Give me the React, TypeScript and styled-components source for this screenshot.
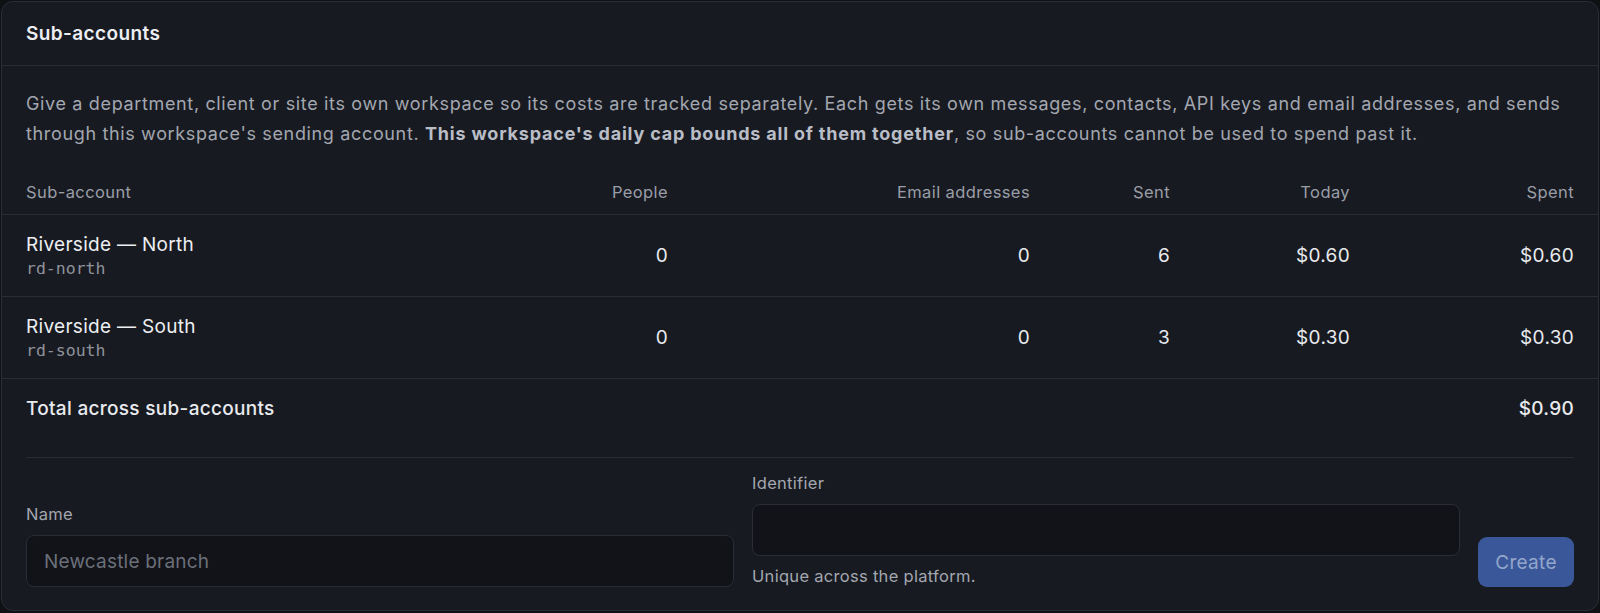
import React, { FC } from 'react';
import styled, { createGlobalStyle } from 'styled-components';

const GlobalStyle = createGlobalStyle`
    * {
        box-sizing: border-box;
    }
    body {
        margin: 0;
        background: #0f1115;
        font-family: Inter, "Noto Sans", sans-serif;
        color: #e6e8ec;
    }
`;

const Card = styled.section`
    margin: 1px;
    height: 610px;
    background: #181a21;
    border: 1px solid #2a2d35;
    border-radius: 12px;
    display: flex;
    flex-direction: column;
    overflow: hidden;
`;

const CardHeader = styled.header`
    height: 64px;
    padding: 0 24px;
    display: flex;
    align-items: center;
    border-bottom: 1px solid #2a2d35;
`;

const Title = styled.h2`
    margin: 0;
    font-size: 19px;
    letter-spacing: 0.4px;
    font-weight: 600;
    color: #eceef2;
`;

const Intro = styled.p`
    margin: 0;
    padding: 23px 24px 0;
    font-size: 18px;
    letter-spacing: 0.65px;
    line-height: 30px;
    color: #a3a7b0;

    strong {
        color: #b9bdc6;
        font-weight: 700;
        letter-spacing: 0.8px;
    }
`;

const columns = 'minmax(0, 1fr) 244px 362px 140px 180px 224px';

const Row = styled.div<{ $height: number; $border?: boolean }>`
    display: grid;
    grid-template-columns: ${columns};
    align-items: center;
    height: ${(p) => p.$height}px;
    padding: 0 24px;
    border-bottom: ${(p) => (p.$border ? '1px solid #2a2d35' : 'none')};
`;

const HeadCell = styled.div<{ $right?: boolean }>`
    font-size: 16.5px;
    letter-spacing: 0.4px;
    color: #9a9ea8;
    text-align: ${(p) => (p.$right ? 'right' : 'left')};
    padding-top: 20px;
`;

const Cell = styled.div<{ $right?: boolean; $bold?: boolean }>`
    font-size: 19px;
    letter-spacing: 0.3px;
    color: #e8eaee;
    font-weight: ${(p) => (p.$bold ? 500 : 400)};
    text-align: ${(p) => (p.$right ? 'right' : 'left')};
`;

const NameCell = styled.div`
    display: flex;
    flex-direction: column;
    gap: 3px;
`;

const AccountName = styled.span`
    font-size: 19px;
    letter-spacing: 0.3px;
    color: #eceef2;
`;

const Slug = styled.span`
    font-family: "DejaVu Sans Mono", "Liberation Mono", monospace;
    font-size: 16.5px;
    color: #8e929b;
`;

const Form = styled.form`
    margin: 20px 24px 0;
    padding-top: 14px;
    border-top: 1px solid #2a2d35;
    display: flex;
    align-items: flex-end;
    gap: 18px;
`;

const Field = styled.label`
    flex: 1;
    display: flex;
    flex-direction: column;
`;

const Label = styled.span`
    font-size: 16.5px;
    letter-spacing: 0.3px;
    color: #a3a7b0;
    line-height: 22px;
    margin-bottom: 10px;
`;

const Input = styled.input`
    height: 52px;
    width: 100%;
    background: #111318;
    border: 1px solid #2a2d35;
    border-radius: 8px;
    padding: 0 17px;
    font-family: Inter, "Noto Sans", sans-serif;
    font-size: 19px;
    letter-spacing: 0.2px;
    color: #e6e8ec;
    outline: none;

    &::placeholder {
        color: #6c707a;
    }
`;

const Hint = styled.span`
    margin-top: 9px;
    font-size: 16.5px;
    letter-spacing: 0.3px;
    line-height: 22px;
    color: #a3a7b0;
`;

const CreateButton = styled.button`
    width: 96px;
    height: 50px;
    border: none;
    border-radius: 9px;
    background: #3a5899;
    color: #93a6cc;
    font-family: Inter, "Noto Sans", sans-serif;
    font-size: 19px;
    letter-spacing: 0.3px;
    cursor: not-allowed;
`;

type Account = {
    name: string;
    slug: string;
    people: number;
    emails: number;
    sent: number;
    today: string;
    spent: string;
};

const accounts: Account[] = [
    { name: 'Riverside — North', slug: 'rd-north', people: 0, emails: 0, sent: 6, today: '$0.60', spent: '$0.60' },
    { name: 'Riverside — South', slug: 'rd-south', people: 0, emails: 0, sent: 3, today: '$0.30', spent: '$0.30' },
];

const App: FC = () => {
    return (
        <>
            <GlobalStyle />
            <Card>
                <CardHeader>
                    <Title>Sub-accounts</Title>
                </CardHeader>
                <Intro>
                    Give a department, client or site its own workspace so its costs are tracked separately. Each gets its
                    own messages, contacts, API keys and email addresses, and sends through this workspace's sending
                    account. <strong>This workspace's daily cap bounds all of them together</strong>, so sub-accounts
                    cannot be used to spend past it.
                </Intro>
                <Row $height={66} $border>
                    <HeadCell>Sub-account</HeadCell>
                    <HeadCell $right>People</HeadCell>
                    <HeadCell $right>Email addresses</HeadCell>
                    <HeadCell $right>Sent</HeadCell>
                    <HeadCell $right>Today</HeadCell>
                    <HeadCell $right>Spent</HeadCell>
                </Row>
                {accounts.map((a) => (
                    <Row $height={82} $border key={a.slug}>
                        <NameCell>
                            <AccountName>{a.name}</AccountName>
                            <Slug>{a.slug}</Slug>
                        </NameCell>
                        <Cell $right>{a.people}</Cell>
                        <Cell $right>{a.emails}</Cell>
                        <Cell $right>{a.sent}</Cell>
                        <Cell $right>{a.today}</Cell>
                        <Cell $right>{a.spent}</Cell>
                    </Row>
                ))}
                <Row $height={58}>
                    <Cell $bold>Total across sub-accounts</Cell>
                    <Cell />
                    <Cell />
                    <Cell />
                    <Cell />
                    <Cell $right $bold>$0.90</Cell>
                </Row>
                <Form onSubmit={(e) => e.preventDefault()}>
                    <Field>
                        <Label>Name</Label>
                        <Input placeholder="Newcastle branch" />
                    </Field>
                    <Field>
                        <Label>Identifier</Label>
                        <Input />
                        <Hint>Unique across the platform.</Hint>
                    </Field>
                    <CreateButton type="submit" disabled>
                        Create
                    </CreateButton>
                </Form>
            </Card>
        </>
    );
};

export default App;
